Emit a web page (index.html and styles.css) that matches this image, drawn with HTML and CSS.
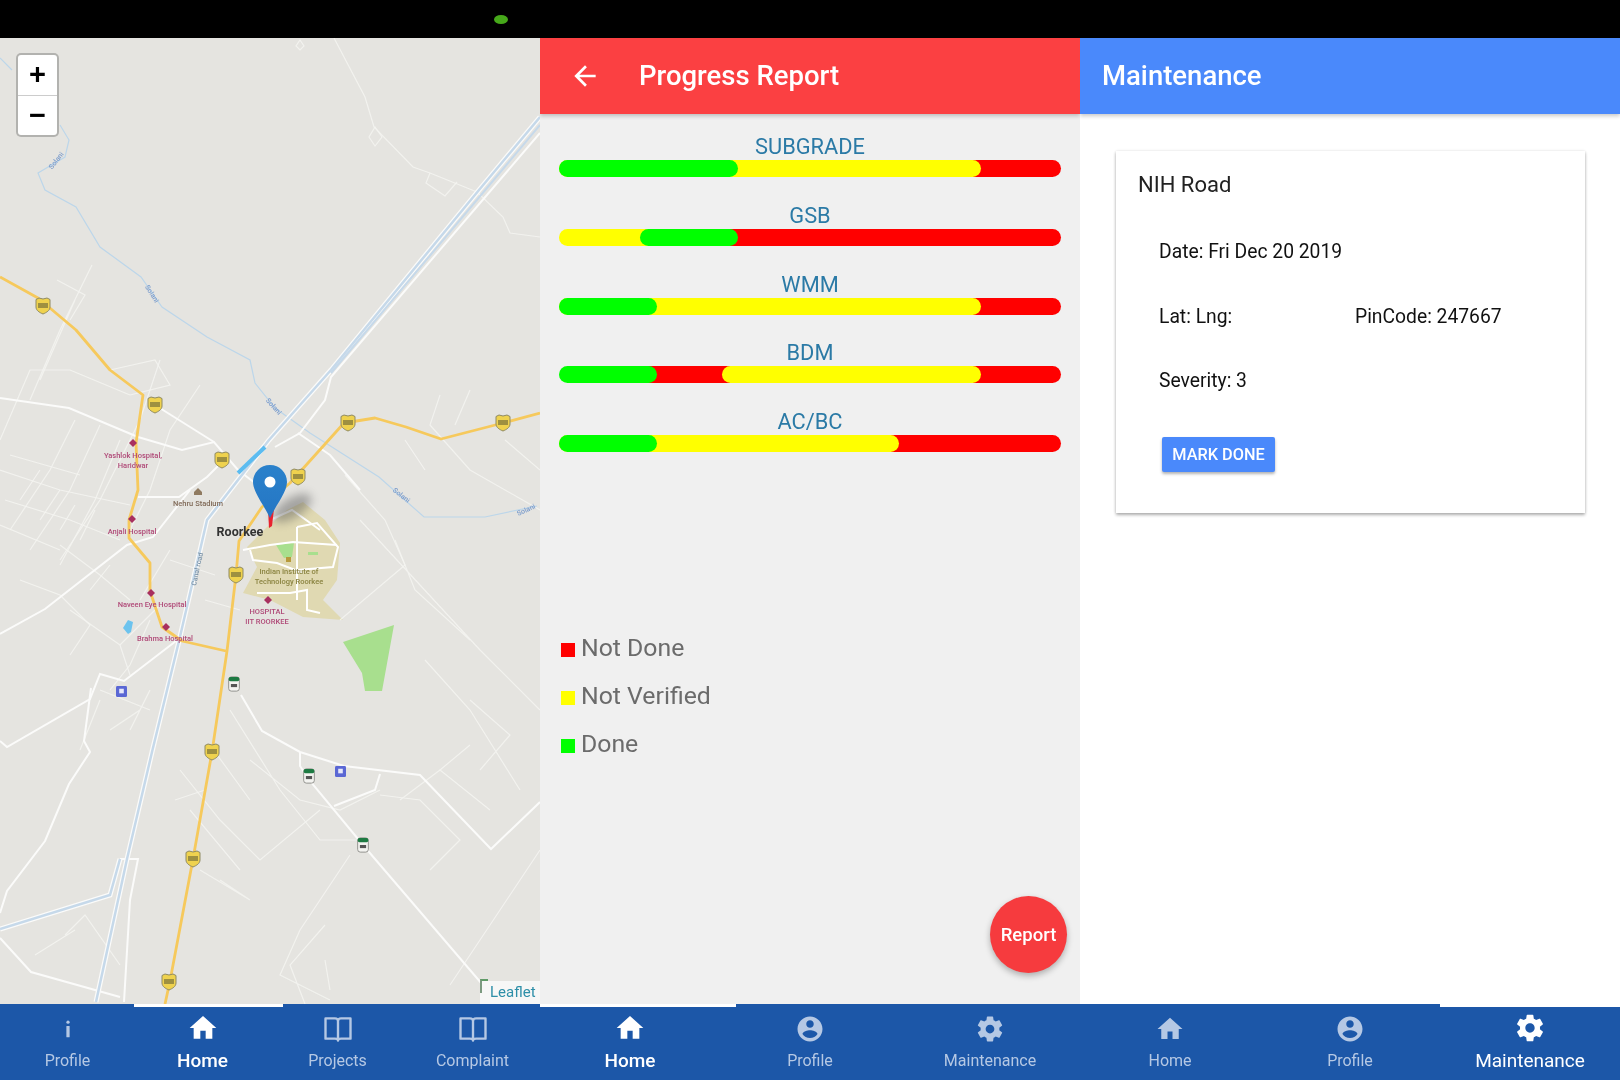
FILE: index.html
```html
<!DOCTYPE html>
<html lang="en">
<head>
<meta charset="utf-8">
<title>Road maintenance screens</title>
<link rel="stylesheet" href="styles.css">
</head>
<body>
<svg class="sprite" aria-hidden="true">
  <symbol id="i-home" viewBox="0 0 24 24"><path d="M10 20v-6h4v6h5v-8h3L12 3 2 12h3v8z"/></symbol>
  <symbol id="i-user" viewBox="0 0 24 24"><path d="M12 2C6.48 2 2 6.48 2 12s4.48 10 10 10 10-4.48 10-10S17.52 2 12 2zm0 3c1.66 0 3 1.34 3 3s-1.34 3-3 3-3-1.34-3-3 1.34-3 3-3zm0 14.2c-2.5 0-4.71-1.28-6-3.22.03-1.99 4-3.08 6-3.08 1.99 0 5.97 1.09 6 3.08-1.29 1.94-3.5 3.22-6 3.22z"/></symbol>
  <symbol id="i-gear" viewBox="0 0 24 24"><path d="M19.43 12.98c.04-.32.07-.64.07-.98s-.03-.66-.07-.98l2.11-1.65c.19-.15.24-.42.12-.64l-2-3.46c-.12-.22-.39-.3-.61-.22l-2.49 1c-.52-.4-1.08-.73-1.69-.98l-.38-2.65C14.46 2.18 14.25 2 14 2h-4c-.25 0-.46.18-.49.42l-.38 2.65c-.61.25-1.17.59-1.69.98l-2.49-1c-.23-.09-.49 0-.61.22l-2 3.46c-.13.22-.07.49.12.64l2.11 1.65c-.04.32-.07.65-.07.98s.03.66.07.98l-2.11 1.65c-.19.15-.24.42-.12.64l2 3.46c.12.22.39.3.61.22l2.49-1c.52.4 1.08.73 1.69.98l.38 2.65c.03.24.24.42.49.42h4c.25 0 .46-.18.49-.42l.38-2.65c.61-.25 1.17-.59 1.69-.98l2.49 1c.23.09.49 0 .61-.22l2-3.46c.12-.22.07-.49-.12-.64l-2.11-1.65zM12 15.5c-1.93 0-3.5-1.57-3.5-3.5s1.57-3.5 3.5-3.5 3.5 1.57 3.5 3.5-1.57 3.5-3.5 3.5z"/></symbol>
  <symbol id="i-book" viewBox="0 0 24 24"><path d="M2 3.5h7.5c1.3 0 2.5.7 2.5 2 0-1.3 1.2-2 2.5-2H22v16.200h-7.500c-1.300 0-2.500.5-2.500 1.500 0-1-1.200-1.500-2.500-1.500H2zM12 5.500v15.500" fill="none" stroke="currentColor" stroke-width="1.900" stroke-linejoin="round"/></symbol>
  <symbol id="i-info" viewBox="0 0 24 24"><circle cx="12" cy="6.500" r="1.300"/><rect x="10.700" y="9.500" width="2.600" height="9" rx=".4"/></symbol>
  <symbol id="i-back" viewBox="0 0 24 24"><path d="M20 11H7.830l5.590-5.590L12 4l-8 8 8 8 1.410-1.410L7.830 13H20v-2z"/></symbol>
  <symbol id="s-nh" viewBox="0 0 16 18"><path d="M1 2.500 4 1l4 1 4-1 3 1.500V10c0 3.500-3.500 5.500-7 7-3.500-1.500-7-3.500-7-7z" fill="#efd24e" stroke="#8f8a62" stroke-width="1"/><rect x="3" y="6" width="10" height="5" fill="#5b5a34" opacity=".55"/></symbol>
  <symbol id="s-sh" viewBox="0 0 14 18"><rect x="1" y="1" width="12" height="16" rx="3" fill="#f3f3f0" stroke="#8a8a85"/><rect x="1" y="1" width="12" height="5" rx="2" fill="#1d7a42"/><rect x="3.500" y="9" width="7" height="3.500" fill="#555"/></symbol>
  <symbol id="s-bus" viewBox="0 0 12 12"><rect width="12" height="12" rx="1.500" fill="#5a67d4"/><rect x="3.500" y="3" width="5" height="5" fill="#e6e8fb"/></symbol>
</svg>

<div class="status-bar"><span class="status-dot"></span></div>

<div class="screens">
  <section class="screen soft">
    <div class="map">
      <svg class="map-svg" viewBox="0 38 540 966" preserveAspectRatio="none" role="img" aria-label="Map of Roorkee">
        <rect x="0" y="38" width="540" height="966" fill="#e5e4e0"/>

        <!-- campus and parks -->
        <path class="campus" d="M267 527 287 510 303 502 325 520 340 543 337 580 323 600 343 620 303 617 270 600 243 593 257 567 247 547z"/>
        <path class="park" d="M343 642 394 625 382 691 365 691 362 673z"/>
        <path class="park" d="M276 545 294 543 292 557 284 558z"/>
        <path class="park" d="M308 552 318 552 318 555 308 555z"/>
        <path class="water" d="M123 628 128 620 133 622 131 632 128 634z"/>

        <!-- minor streets -->
        <g class="street">
          <path d="M334 38 365 97 374 127 413 167 430 173 477 192 503 217 510 233 540 237"/>
          <path d="M375 127 369 137 375 146 382 137zM430 173 426 183 445 196 457 182"/>
          <path d="M300 40 296 46 300 50 304 46z"/>
          <path d="M92 265 60 330 30 400M57 280 85 295 70 320M75 300 40 380"/>
          <path d="M110 370 155 360 170 385 130 395M0 440 30 370 70 370 130 395"/>
          <path d="M160 360 140 420 100 500 60 560M200 385 170 430 150 490 130 530"/>
          <path d="M75 420 50 470 10 530M100 425 70 490 30 550M120 440 95 500 60 565"/>
          <path d="M0 470 60 490 130 505M10 455 80 475M5 500 70 520 120 540M0 525 60 550"/>
          <path d="M20 500 40 470M40 520 60 490M60 530 75 505M80 540 95 510"/>
          <path d="M60 545 100 575 130 600M20 580 60 595 90 625 70 655"/>
          <path d="M70 610 120 645 160 605M120 645 130 675M90 590 110 565"/>
          <path d="M150 620 130 665 110 690M140 600 170 550M170 560 215 575"/>
          <path d="M440 395 430 425 470 470 540 510M470 390 455 425M505 440 540 470M345 475 385 520 405 565 340 620"/>
          <path d="M360 520 420 585 480 650 540 710M395 540 415 590 470 640M405 440 425 470"/>
          <path d="M425 660 470 710 520 790M470 745 440 770 490 810M470 700 510 735 480 770"/>
          <path d="M230 710 280 790 320 840 360 840M250 760 300 800 340 810 380 790"/>
          <path d="M180 770 220 820 260 860 320 810M190 810 240 870M210 745 250 800M175 800 205 790"/>
          <path d="M200 870 250 900 220 880M350 855 300 930 280 975 330 1000M325 925 290 965 305 1004M325 960 330 990"/>
          <path d="M540 850 450 985M380 795 420 800 460 840 430 870M400 800 440 770"/>
          <path d="M65 935 85 915 120 965M35 955 75 930M80 750 100 700"/>
          <path d="M205 600 240 610M100 690 150 710M110 730 140 710M150 690 130 730"/>
        </g>

        <!-- white roads -->
        <g class="road">
          <path d="M0 398 69 408 138 437 182 450 214 442 238 470 255 483"/>
          <path d="M155 405 214 442"/>
          <path d="M138 497 179 497 207 477 222 462"/>
          <path d="M0 634 45 609 127 545 153 537 190 490"/>
          <path d="M0 741 7 747 90 699 100 674 124 681 176 641"/>
          <path d="M91 688 84 741 90 752 69 784 45 841 7 891 0 913"/>
          <path d="M0 938 31 972 120 997"/>
          <path d="M124 1002 130 900 138 859 120 859"/>
          <path d="M241 695 262 731 300 752 344 766 420 775 491 849 540 802"/>
          <path d="M300 752 300 766 310 781 363 845 482 984"/>
          <path d="M380 774 375 790 334 806"/>
          <path d="M298 433 330 455 360 490"/>
        </g>

        <!-- campus roads -->
        <g class="campus-road">
          <path d="M243 550 270 545 293 542 337 545"/>
          <path d="M297 527 317 523 338 547 333 567 297 570"/>
          <path d="M250 550 253 560 277 563 303 573"/>
          <path d="M257 593 290 593 307 590 307 610 320 613"/>
          <path d="M297 527 297 600"/>
          <path d="M270 520 292 510 320 530"/>
        </g>

        <!-- river, canal -->
        <path class="river" d="M0 58 12 70M60 125 69 140 65 157 38 173 45 190 76 207 100 247 141 277 162 307 207 337 250 360 255 383 275 408 310 433 379 477 424 517 485 517 537 506"/>
        <path class="canal-edge" d="M540 117 479 190 331 370 269 440 207 520 179 641 152 752 127 859 96 1002"/>
        <path class="canal" d="M540 117 479 190 331 370 269 440 207 520 179 641 152 752 127 859 96 1002"/>
        <path class="road" d="M540 133 331 377 325 400 300 433 275 447"/>
        <path class="canal-thin" d="M540 125 331 373"/>
        <path class="canal-edge" d="M0 929 110 895 120 859"/>
        <path class="canal" d="M0 929 110 895 120 859"/>
        <path class="water-stroke" d="M238 473 265 447"/>

        <!-- highways -->
        <g class="highway">
          <path d="M0 277 38 298 76 330 110 370 143 395 136 443 138 490 129 520 129 538 150 563 150 591 162 627 182 641 226 651"/>
          <path d="M165 1004 170 981 193 859 212 752 227 651 236 575 239 541 262 507 290 483 344 423 375 418 406 427 441 439 503 423 540 413"/>
        </g>

        <!-- shields -->
        <g>
          <use href="#s-nh" x="35" y="297" width="16" height="18"/>
          <use href="#s-nh" x="147" y="396" width="16" height="18"/>
          <use href="#s-nh" x="214" y="451" width="16" height="18"/>
          <use href="#s-nh" x="290" y="468" width="16" height="18"/>
          <use href="#s-nh" x="340" y="414" width="16" height="18"/>
          <use href="#s-nh" x="495" y="414" width="16" height="18"/>
          <use href="#s-nh" x="228" y="566" width="16" height="18"/>
          <use href="#s-nh" x="204" y="743" width="16" height="18"/>
          <use href="#s-nh" x="185" y="850" width="16" height="18"/>
          <use href="#s-nh" x="161" y="973" width="16" height="18"/>
          <use href="#s-sh" x="227" y="676" width="14" height="16"/>
          <use href="#s-sh" x="302" y="768" width="14" height="16"/>
          <use href="#s-sh" x="356" y="837" width="14" height="16"/>
          <use href="#s-bus" x="116" y="686" width="11" height="11"/>
          <use href="#s-bus" x="335" y="766" width="11" height="11"/>
        </g>

        <!-- poi markers -->
        <g class="poi">
          <path d="M133 439l4 4-4 4-4-4z"/>
          <path d="M132 515l4 4-4 4-4-4z"/>
          <path d="M151 589l4 4-4 4-4-4z"/>
          <path d="M166 623l4 4-4 4-4-4z"/>
          <path d="M268 596l4 4-4 4-4-4z"/>
        </g>
        <path class="stadium" d="M198 488l-4 4v3h8v-3z"/>
        <rect x="286" y="557" width="5" height="5" fill="#b79a3c"/>

        <!-- labels -->
        <g class="lbl-poi">
          <text x="133" y="458">Yashlok Hospital,</text>
          <text x="133" y="468">Haridwar</text>
          <text x="132" y="534">Anjali Hospital</text>
          <text x="152" y="607">Naveen Eye Hospital</text>
          <text x="165" y="641">Brahma Hospital</text>
          <text x="267" y="614">HOSPITAL</text>
          <text x="267" y="624">IIT ROORKEE</text>
        </g>
        <text class="lbl-town" x="240" y="536">Roorkee</text>
        <text class="lbl-stadium" x="198" y="506">Nehru Stadium</text>
        <text class="lbl-campus" x="289" y="574">Indian Institute of</text>
        <text class="lbl-campus" x="289" y="584">Technology Roorkee</text>
        <text class="lbl-canal" transform="translate(196 586) rotate(-78)">Canal road</text>
        <g class="lbl-river">
          <text transform="translate(58 162) rotate(-52)">Solani</text>
          <text transform="translate(150 295) rotate(58)">Solani</text>
          <text transform="translate(272 408) rotate(48)">Solani</text>
          <text transform="translate(400 497) rotate(38)">Solani</text>
          <text transform="translate(527 512) rotate(-25)">Solani</text>
        </g>
        <!-- pin -->
        <ellipse class="pin-shadow" cx="292" cy="508" rx="22" ry="10" transform="rotate(-32 292 508)"/>
        <path class="pin-tip" d="M268 509 274 509 272 526 269 528z"/>
        <defs>
          <linearGradient id="pin-grad" x1="0" y1="0" x2="0" y2="1">
            <stop offset="0" stop-color="#2a81cb"/><stop offset="1" stop-color="#2576c4"/>
          </linearGradient>
        </defs>
        <path d="M270 465c-9.500 0-17 7.500-17 17 0 10 11 23 17 36 6-13 17-26 17-36 0-9.500-7.500-17-17-17z" fill="url(#pin-grad)"/>
        <circle cx="270" cy="482" r="5.500" fill="#fff"/>
      </svg>
      <div class="zoom-control">
        <span class="zoom-btn">+</span>
        <span class="zoom-btn">−</span>
      </div>
      <div class="attribution"><span class="attr-mark"></span>Leaflet</div>
    </div>
    <nav class="tabs">
      <a class="tab"><svg class="tab-icon"><use href="#i-info"/></svg><span>Profile</span></a>
      <a class="tab active bold reach-a"><svg class="tab-icon"><use href="#i-home"/></svg><span>Home</span></a>
      <a class="tab"><svg class="tab-icon"><use href="#i-book"/></svg><span>Projects</span></a>
      <a class="tab"><svg class="tab-icon"><use href="#i-book"/></svg><span>Complaint</span></a>
    </nav>
  </section>

  <section class="screen soft">
    <header class="appbar red">
      <svg class="back"><use href="#i-back"/></svg>
      <h1 class="title">Progress Report</h1>
    </header>
    <main class="report">
      <div class="rows">
        <div class="row">
          <div class="row-label">SUBGRADE</div>
          <div class="bar">
            <span class="seg yellow" style="width:84%"></span>
            <span class="seg green" style="width:35.6%"></span>
          </div>
        </div>
        <div class="row">
          <div class="row-label">GSB</div>
          <div class="bar">
            <span class="seg yellow" style="width:25%"></span>
            <span class="seg green" style="margin-left:16.2%;width:19.5%"></span>
          </div>
        </div>
        <div class="row">
          <div class="row-label">WMM</div>
          <div class="bar">
            <span class="seg yellow" style="width:84%"></span>
            <span class="seg green" style="width:19.5%"></span>
          </div>
        </div>
        <div class="row">
          <div class="row-label">BDM</div>
          <div class="bar">
            <span class="seg yellow" style="margin-left:32.4%;width:51.6%"></span>
            <span class="seg green" style="width:19.5%"></span>
          </div>
        </div>
        <div class="row">
          <div class="row-label">AC/BC</div>
          <div class="bar">
            <span class="seg yellow" style="width:67.8%"></span>
            <span class="seg green" style="width:19.5%"></span>
          </div>
        </div>
      </div>
      <ul class="legend">
        <li class="legend-item"><span class="swatch swatch-red"></span>Not Done</li>
        <li class="legend-item"><span class="swatch swatch-yellow"></span>Not Verified</li>
        <li class="legend-item"><span class="swatch swatch-green"></span>Done</li>
      </ul>
      <button class="fab">Report</button>
    </main>
    <nav class="tabs">
      <a class="tab active bold reach-b"><svg class="tab-icon"><use href="#i-home"/></svg><span>Home</span></a>
      <a class="tab"><svg class="tab-icon"><use href="#i-user"/></svg><span>Profile</span></a>
      <a class="tab"><svg class="tab-icon"><use href="#i-gear"/></svg><span>Maintenance</span></a>
    </nav>
  </section>

  <section class="screen soft-lite">
    <header class="appbar blue">
      <h1 class="title">Maintenance</h1>
    </header>
    <main class="maint">
      <article class="card">
        <h2 class="card-title">NIH Road</h2>
        <div class="card-body">
          <div class="line">Date: Fri Dec 20 2019</div>
          <div class="line line-split"><span>Lat: Lng:</span><span>PinCode: 247667</span></div>
          <div class="line">Severity: 3</div>
          <button class="mark">MARK DONE</button>
        </div>
      </article>
    </main>
    <nav class="tabs">
      <a class="tab"><svg class="tab-icon"><use href="#i-home"/></svg><span>Home</span></a>
      <a class="tab"><svg class="tab-icon"><use href="#i-user"/></svg><span>Profile</span></a>
      <a class="tab active"><svg class="tab-icon"><use href="#i-gear"/></svg><span>Maintenance</span></a>
    </nav>
  </section>
</div>
</body>
</html>
```

FILE: styles.css
```css
* { box-sizing: border-box; }
html, body { margin: 0; height: 100%; }
body {
  width: 1620px;
  height: 1080px;
  display: flex;
  flex-direction: column;
  overflow: hidden;
  font-family: Roboto, "Liberation Sans", sans-serif;
  background: #000;
}
.sprite { width: 0; height: 0; display: block; flex: none; }

.status-bar {
  height: 38px;
  flex: none;
  background: #000;
  display: flex;
  align-items: center;
  padding-left: 494px;
}
.status-dot {
  width: 14px;
  height: 9px;
  border-radius: 50%;
  background: #46a81a;
  filter: blur(.6px);
}

.screens { flex: 1; display: flex; min-height: 0; }
.screen {
  width: 540px;
  flex: none;
  display: flex;
  flex-direction: column;
  background: #fff;
  overflow: hidden;
}
.soft { filter: blur(.55px); }
.soft-lite { filter: blur(.3px); }

/* Map */
.map { flex: 1; position: relative; min-height: 0; overflow: hidden; }
.map-svg { display: block; width: 100%; height: 100%; filter: blur(.5px); }
.campus { fill: #e0d9b2; }
.park { fill: #a8df8e; }
.water { fill: #6cc3ee; }
.water-stroke { fill: none; stroke: #5cbcf0; stroke-width: 4; }
.street path { fill: none; stroke: #f4f4f1; stroke-width: 1.2; opacity: .85; }
.road, .road path { fill: none; stroke: #fbfbfa; stroke-width: 2; }
.campus-road path { fill: none; stroke: #fff; stroke-width: 2; }
.river { fill: none; stroke: #bcd6ea; stroke-width: 1.2; }
.canal { fill: none; stroke: #c6d9ea; stroke-width: 2.5; }
.canal-edge { fill: none; stroke: #fbfbfa; stroke-width: 5; }
.canal-thin { fill: none; stroke: #c6d9ea; stroke-width: 2; }
.highway path { fill: none; stroke: #f6c95c; stroke-width: 2.8; stroke-linejoin: round; }
.poi path { fill: #a8305f; }
.stadium { fill: #8f7a60; }
.lbl-poi text {
  font: 500 7.5px Roboto, sans-serif;
  fill: #b04a78;
  text-anchor: middle;
}
.lbl-town { font: 700 12.5px Roboto, sans-serif; fill: #333; text-anchor: middle; }
.lbl-stadium { font: 500 7.5px Roboto, sans-serif; fill: #806a58; text-anchor: middle; }
.lbl-campus { font: 500 7.5px Roboto, sans-serif; fill: #8a8340; text-anchor: middle; }
.lbl-canal { font: 500 7px Roboto, sans-serif; fill: #7b93a8; }
.lbl-river text { font: 500 7px Roboto, sans-serif; fill: #7b9ccc; text-anchor: middle; }
.pin-shadow { fill: #555; opacity: .45; filter: blur(5px); }
.pin-tip { fill: #e8222e; }

.zoom-control {
  position: absolute;
  left: 18px;
  top: 17px;
  width: 39px;
  height: 80px;
  display: flex;
  flex-direction: column;
  background: #fff;
  border-radius: 3px;
  box-shadow: 0 0 0 2px rgba(0, 0, 0, .22);
}
.zoom-btn {
  flex: 1;
  display: flex;
  align-items: center;
  justify-content: center;
  font: 700 29px "Liberation Sans", sans-serif;
  color: #000;
}
.zoom-btn + .zoom-btn { border-top: 1px solid #ccc; }

.attribution {
  position: absolute;
  right: 0;
  bottom: 0;
  width: 60px;
  height: 23px;
  padding: 1px 0 0 10px;
  font-size: 15px;
  line-height: 20px;
  color: #2e8fa8;
  background: rgba(255, 255, 255, .7);
}
.attr-mark {
  position: absolute;
  left: 0;
  top: -2px;
  width: 8px;
  height: 14px;
  border-left: 2px solid #7c9a80;
  border-top: 2px solid #5f9b67;
}

/* Bottom tabs */
.tabs {
  flex: none;
  height: 76px;
  display: flex;
  background: #1c57a8;
}
.tab {
  flex: 1;
  min-width: 0;
  position: relative;
  display: flex;
  flex-direction: column;
  align-items: center;
  padding-top: 10px;
  color: #b5c8e4;
  font-size: 16px;
  line-height: 20px;
}
.tab-icon { width: 30px; height: 30px; margin-bottom: 7px; fill: currentColor; color: inherit; }
.tab.active {
  padding-top: 8px;
  color: #fff;
  font-size: 19px;
}
.tab.active::before {
  content: "";
  position: absolute;
  left: 0;
  right: 0;
  top: 0;
  height: 3px;
  background: #fff;
  z-index: 1;
}
.tab.bold { font-weight: 500; }
.tab.reach-a::before { left: -1px; right: -13px; }
.tab.reach-b::before { right: -16px; }
.tab.active .tab-icon { width: 32px; height: 32px; margin-bottom: 7px; }

/* App bars */
.appbar {
  flex: none;
  height: 76px;
  display: flex;
  align-items: center;
  position: relative;
  z-index: 1;
  padding-left: 22px;
  box-shadow: 0 2px 4px rgba(0, 0, 0, .22);
  color: #fff;
}
.red { background: #fb4042; padding-left: 29px; }
.blue { background: #4a89fb; }
.back { width: 32px; height: 32px; fill: #fff; margin-right: 38px; }
.title { margin: 0; font-size: 27.5px; font-weight: 500; line-height: 34px; }

/* Progress report */
.report {
  flex: 1;
  min-height: 0;
  position: relative;
  padding: 20px 19px 0;
  background: #f0f0f0;
}
.rows { display: flex; flex-direction: column; gap: 25.75px; }
.row-label {
  height: 26px;
  line-height: 26px;
  text-align: center;
  font-size: 21.8px;
  color: #2b7aa6;
}
.bar {
  height: 17px;
  display: grid;
  background: linear-gradient(90deg, transparent 9px, #ff0000 9px);
  border-radius: 0 9px 9px 0;
  overflow: hidden;
}
.seg { grid-area: 1 / 1; height: 17px; border-radius: 9px; }
.green { background: #00ff00; }
.yellow { background: #ffff00; }

.legend {
  list-style: none;
  margin: 182px 0 0;
  padding: 0 0 0 2px;
  display: flex;
  flex-direction: column;
  gap: 20px;
}
.legend-item {
  height: 28px;
  display: flex;
  align-items: center;
  gap: 6px;
  font-size: 24.8px;
  line-height: 28px;
  color: #6b6b6b;
}
.swatch { width: 14px; height: 14px; flex: none; margin-top: 4px; }
.swatch-red { background: #ff0000; }
.swatch-yellow { background: #ffff00; }
.swatch-green { background: #00ff00; }

.fab {
  position: absolute;
  right: 13px;
  top: 782px;
  width: 77px;
  height: 77px;
  border: 0;
  padding: 0;
  border-radius: 50%;
  background: #f63b3e;
  color: #fff;
  font: 500 18.5px Roboto, sans-serif;
  box-shadow: 0 3px 6px rgba(0, 0, 0, .28);
}

/* Maintenance */
.maint {
  flex: 1;
  min-height: 0;
  padding: 37px 35px 0 36px;
  background: #fff;
}
.card {
  height: 362px;
  padding: 19px 22px 0;
  background: #fff;
  box-shadow: 0 2px 3px rgba(0, 0, 0, .3), 0 0 3px rgba(0, 0, 0, .1);
}
.card-title {
  margin: 0 0 39px;
  font-size: 22px;
  font-weight: 400;
  line-height: 30px;
  color: #222;
}
.card-body {
  padding-left: 21px;
  display: flex;
  flex-direction: column;
  align-items: flex-start;
  gap: 38.5px;
}
.line {
  height: 26px;
  line-height: 26px;
  font-size: 19.3px;
  color: #111;
}
.line-split { display: grid; grid-template-columns: 196px auto; }
.mark {
  height: 35px;
  width: 113px;
  margin: 4px 0 0 3px;
  border: 0;
  border-radius: 2px;
  background: #4a89fb;
  color: #fff;
  font: 500 16.3px Roboto, sans-serif;
  box-shadow: 0 2px 3px rgba(0, 0, 0, .3);
}
```
